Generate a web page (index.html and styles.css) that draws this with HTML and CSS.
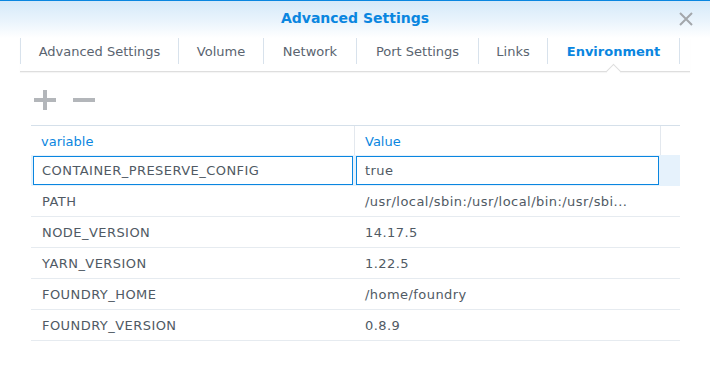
FILE: index.html
```html
<!DOCTYPE html>
<html lang="en">
<head>
  <meta charset="UTF-8">
  <title>Advanced Settings - Environment</title>
  <link rel="stylesheet" href="styles.css">
</head>
<body>
  <div class="dialog">
    <div class="titlebar">
      <span class="title">Advanced Settings</span>
      <button class="close" aria-label="Close">
        <svg width="14" height="14" viewBox="0 0 14 14">
          <path d="M1 1 L13 13 M13 1 L1 13" stroke="#a3a7ab" stroke-width="2" fill="none"/>
        </svg>
      </button>
    </div>

    <div class="tabs">
      <div class="tab t-adv">Advanced Settings</div>
      <div class="tab t-vol">Volume</div>
      <div class="tab t-net">Network</div>
      <div class="tab t-port">Port Settings</div>
      <div class="tab t-links">Links</div>
      <div class="tab t-env active">Environment</div>
    </div>

    <div class="toolbar">
      <button class="tool" aria-label="Add">
        <svg width="24" height="24" viewBox="0 0 24 24">
          <path d="M12 1 V21 M1 11 H23" stroke="#b3b6ba" stroke-width="4" fill="none"/>
        </svg>
      </button>
      <button class="tool" aria-label="Remove">
        <svg width="24" height="24" viewBox="0 0 24 24">
          <path d="M1 11 H23" stroke="#b3b6ba" stroke-width="4" fill="none"/>
        </svg>
      </button>
    </div>

    <div class="grid">
      <div class="row head">
        <div class="cell">variable</div>
        <div class="cell">Value</div>
        <div class="cell spacer"></div>
      </div>
      <div class="row selected">
        <div class="cell edit"><div class="input">CONTAINER_PRESERVE_CONFIG</div></div>
        <div class="cell edit"><div class="input">true</div></div>
        <div class="cell spacer"></div>
      </div>
      <div class="row">
        <div class="cell">PATH</div>
        <div class="cell">/usr/local/sbin:/usr/local/bin:/usr/sbi...</div>
        <div class="cell spacer"></div>
      </div>
      <div class="row">
        <div class="cell">NODE_VERSION</div>
        <div class="cell">14.17.5</div>
        <div class="cell spacer"></div>
      </div>
      <div class="row">
        <div class="cell">YARN_VERSION</div>
        <div class="cell">1.22.5</div>
        <div class="cell spacer"></div>
      </div>
      <div class="row">
        <div class="cell">FOUNDRY_HOME</div>
        <div class="cell">/home/foundry</div>
        <div class="cell spacer"></div>
      </div>
      <div class="row">
        <div class="cell">FOUNDRY_VERSION</div>
        <div class="cell">0.8.9</div>
        <div class="cell spacer"></div>
      </div>
    </div>
  </div>
</body>
</html>
```

FILE: styles.css
```css
body {
  margin: 0;
  background: #fff;
  font-family: 'DejaVu Sans', Verdana, sans-serif;
  font-size: 13px;
  color: #505a64;
}

.dialog {
  width: 710px;
  height: 386px;
  background: #fff;
}

.titlebar {
  position: relative;
  height: 37px;
  border-top: 1px solid #0a86e0;
  background: linear-gradient(to bottom, #d5e9f9 0%, #eaf4fc 55%, #ffffff 100%);
  display: flex;
  align-items: center;
  justify-content: center;
}

.title {
  font-size: 14px;
  font-weight: bold;
  color: #0a86e0;
  margin-top: -3px;
}

.close {
  position: absolute;
  right: 17px;
  top: 11px;
  border: 0;
  padding: 0;
  background: none;
  width: 14px;
  height: 14px;
  display: flex;
}

.tabs {
  display: flex;
  margin: 0 20px;
  padding-bottom: 7px;
  border-bottom: 1px solid #dedede;
  box-shadow: 0 1px 1px rgba(0, 0, 0, 0.04);
}

.tab {
  height: 26px;
  line-height: 28px;
  color: #5a6470;
  border-left: 1px solid #d8e2ec;
  white-space: nowrap;
  text-align: center;
  position: relative;
  box-sizing: border-box;
}

.t-adv { width: 158px; }
.t-vol { width: 85px; }
.t-net { width: 93px; }
.t-port { width: 122px; }
.t-links { width: 69px; }
.t-env { width: 133px; }

.tab.active {
  color: #0a86e0;
  font-weight: bold;
  border-right: 1px solid #d8e2ec;
}

/* small notch under the active tab */
.tab.active::after {
  content: "";
  position: absolute;
  left: 50%;
  top: 28px;
  width: 10px;
  height: 10px;
  margin-left: -6px;
  background: #fff;
  border-left: 1px solid #dedede;
  border-top: 1px solid #dedede;
  transform: rotate(45deg);
  z-index: 1;
}

.toolbar {
  display: flex;
  gap: 15px;
  padding: 17px 0 0 33px;
  height: 36px;
}

.tool {
  border: 0;
  padding: 0;
  background: none;
  width: 24px;
  height: 24px;
  display: flex;
}

.grid {
  margin-left: 31px;
  width: 649px;
  border-top: 1px solid #d5e0ea;
}

.row {
  display: flex;
  height: 30px;
  border-bottom: 1px solid #e6ebf0;
}

.row.head {
  height: 29px;
  border-bottom: 0;
}

.cell {
  display: flex;
  align-items: center;
  padding-left: 11px;
  padding-top: 1px;
  white-space: nowrap;
  overflow: hidden;
  letter-spacing: 0.45px;
}

.cell:nth-child(1) {
  width: 324px;
  box-sizing: border-box;
}

.cell:nth-child(2) {
  width: 306px;
  box-sizing: border-box;
  padding-left: 10px;
}

.cell.spacer {
  flex: 1;
  padding: 0;
}

.row.head .cell {
  color: #0a86e0;
  letter-spacing: 0;
}

.row.head .cell:nth-child(1),
.row.head .cell:nth-child(2) {
  border-right: 1px solid #e3e8ee;
}

.row.head .cell:nth-child(1) {
  padding-left: 10px;
}

.row.selected {
  background: #e6f2fc;
  border-bottom-color: #e6f2fc;
}

.cell.edit {
  padding: 1px 2px 0 2px;
  align-items: stretch;
}

.cell.edit:nth-child(2) {
  padding: 1px 2px 0 1px;
}

.input {
  flex: 1;
  border: 1px solid #0a86e0;
  background: #fff;
  display: flex;
  align-items: center;
  padding: 0 0 0 8px;
}
```
